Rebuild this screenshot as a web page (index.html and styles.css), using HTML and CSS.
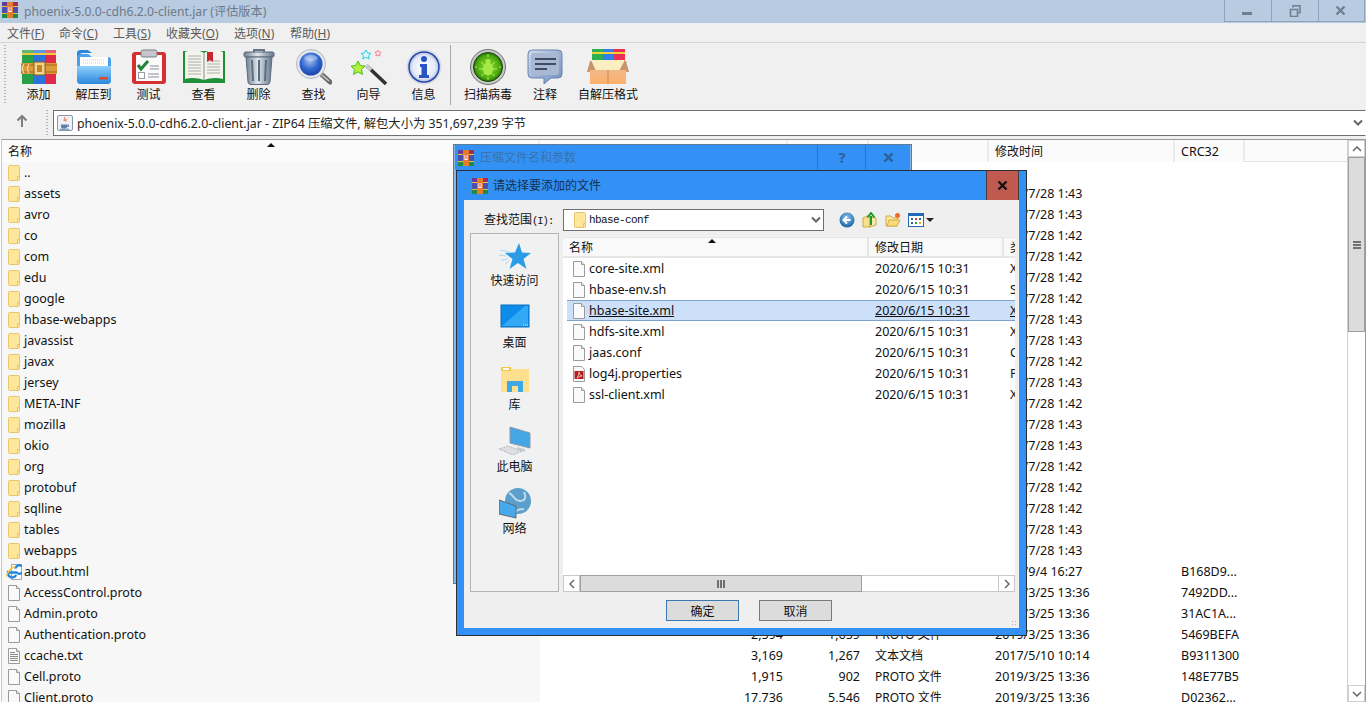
FILE: index.html
```html
<!DOCTYPE html>
<html lang="zh-CN">
<head>
<meta charset="utf-8">
<title>phoenix-5.0.0-cdh6.2.0-client.jar (评估版本)</title>
<link rel="stylesheet" href="styles.css">
</head>
<body>
<svg class="defs" aria-hidden="true">
  <defs>
    <linearGradient id="gFolder" x1="0" y1="0" x2="0" y2="1"><stop offset="0" stop-color="#8fd0fb"/><stop offset="1" stop-color="#2b87de"/></linearGradient>
    <linearGradient id="gTrash" x1="0" y1="0" x2="1" y2="0"><stop offset="0" stop-color="#6f7f90"/><stop offset=".45" stop-color="#dfe6ec"/><stop offset="1" stop-color="#66768a"/></linearGradient>
    <radialGradient id="gLens" cx=".45" cy=".35" r=".7"><stop offset="0" stop-color="#a9c3ef"/><stop offset=".55" stop-color="#2f66cf"/><stop offset="1" stop-color="#1a3ea0"/></radialGradient>
    <radialGradient id="gInfo" cx=".5" cy=".5" r=".5"><stop offset="0" stop-color="#ffffff"/><stop offset=".75" stop-color="#e3eaf8"/><stop offset="1" stop-color="#aebbdc"/></radialGradient>
    <radialGradient id="gBug" cx=".5" cy=".5" r=".5"><stop offset="0" stop-color="#8fe02a"/><stop offset=".8" stop-color="#4aa80f"/><stop offset="1" stop-color="#1f6b08"/></radialGradient>
    <linearGradient id="gBubble" x1="0" y1="0" x2="1" y2="1"><stop offset="0" stop-color="#cfdcf0"/><stop offset="1" stop-color="#6e8dbb"/></linearGradient>
    <linearGradient id="gBox" x1="0" y1="0" x2="0" y2="1"><stop offset="0" stop-color="#f0b98a"/><stop offset="1" stop-color="#ffb06a"/></linearGradient>
    <radialGradient id="gBack" cx=".5" cy=".35" r=".7"><stop offset="0" stop-color="#8dc4ec"/><stop offset="1" stop-color="#0f5a9a"/></radialGradient>

    <symbol id="rar" viewBox="0 0 16 16">
      <rect x="0" y="0" width="16" height="5" fill="#a52c52"/><rect x="0" y="0" width="5" height="5" fill="#6b3a96"/>
      <rect x="0" y="5" width="16" height="6" fill="#4a4fb0"/><rect x="0" y="11" width="16" height="5" fill="#1f8a45"/>
      <rect x="0" y="4" width="16" height="1" fill="#f0c040"/><rect x="0" y="11" width="16" height="1" fill="#e8c038"/>
      <rect x="5" y="0" width="6" height="16" fill="#e37d2a"/><rect x="6.5" y="5" width="3" height="5" fill="#fff"/><rect x="7.5" y="5" width="1" height="4" fill="#c33"/>
    </symbol>
    <symbol id="doc" viewBox="0 0 16 16"><path d="M2.500.5h8l3 3v12h-11z" fill="#fafafa" stroke="#9b9b9b"/><path d="M10.500.5v3h3" fill="#e8e8e8" stroke="#9b9b9b"/></symbol>
    <symbol id="txt" viewBox="0 0 16 16"><path d="M2.500.5h8l3 3v12h-11z" fill="#fafafa" stroke="#9b9b9b"/><path d="M10.500.5v3h3" fill="#e8e8e8" stroke="#9b9b9b"/><path d="M4 4.500h5M4 6.500h8M4 8.500h8M4 10.500h8M4 12.500h8" stroke="#8a8a8a" fill="none"/></symbol>
    <symbol id="folder" viewBox="0 0 16 16"><rect x="2.500" y=".5" width="11" height="15" rx="1" fill="#fee69a" stroke="#e9c56f"/><path d="M11.500 15.500v-4h2" fill="none" stroke="#e9c56f"/></symbol>
    <symbol id="ie" viewBox="0 0 16 16"><path d="M5.500.5h7l3 3v12h-10z" fill="#fafafa" stroke="#a5a5a5"/><path d="M2 8.500h8.500A4.300 4.300 0 1 0 9.300 4.600M10.200 11A4.300 4.300 0 0 1 2.400 7" fill="none" stroke="#1e86e0" stroke-width="2.300"/><path d="M.8 12.500C.2 10 4 4.500 9.500 2.200" fill="none" stroke="#f5c52c" stroke-width="1.300"/></symbol>
    <symbol id="pdf" viewBox="0 0 16 16"><path d="M2.500.5h8l3 3v12h-11z" fill="#fafafa" stroke="#9b9b9b"/><rect x="3.500" y="5" width="9" height="8" fill="#b81c1c"/><path d="M6 12c1.500-2 2-4 2-6 0 2 1 3 3 4-2 0-3.500 1-5 2z" fill="none" stroke="#fff" stroke-width=".7"/></symbol>
    <symbol id="jar" viewBox="0 0 16 16"><rect x=".5" y=".5" width="15" height="15" rx="1.500" fill="#eef2f7" stroke="#8b97a6"/><path d="M4 9.500h6v2a2 2 0 0 1-2 2H6a2 2 0 0 1-2-2z" fill="#5c7fa8"/><path d="M10 10h1.500v1.500H10M3 14.200h9" fill="none" stroke="#5c7fa8"/><path d="M7.500 2.500c1 1.500-1.500 2 0 3.500M9 4c.5 1-.8 1.500 0 2.500" fill="none" stroke="#d9531e"/></symbol>

    <symbol id="t-add" viewBox="0 0 36 36">
      <rect x="1" y="1" width="11" height="34" fill="#27a046"/><rect x="12" y="1" width="12" height="34" fill="#2c74dd"/><rect x="24" y="1" width="11" height="34" fill="#de2b4c"/>
      <path d="M1 4h34v2H1z" fill="#f3c93f"/><path d="M1 1h34v3H1z" fill="#fff" opacity=".25"/>
      <rect x="0" y="14" width="36" height="11" fill="#dc9a3a"/><path d="M0 16h36M0 23h36" stroke="#a96b1e"/>
      <rect x="13" y="13" width="11" height="13" fill="#f5d58c" stroke="#8a5a1a"/><rect x="16" y="16" width="5" height="7" fill="#c2832a"/>
      <path d="M3 15c-2 3-2 6 0 9M8 15c-2 3-2 6 0 9" fill="none" stroke="#fff2c8"/>
    </symbol>
    <symbol id="t-ext" viewBox="0 0 36 36">
      <path d="M1 8a3 3 0 0 1 3-3h8l4 3h16a3 3 0 0 1 3 3v20a4 4 0 0 1-4 4H5a4 4 0 0 1-4-4z" fill="#4aa0ea"/>
      <path d="M1 3.500a3 3 0 0 1 3-2.500h7c2 0 3 2 5 3H8C4 4 2 6 1 9z" fill="#2e86d8"/>
      <rect x="4" y="8" width="28" height="14" fill="#fff"/><path d="M7 11h22M7 14h22" stroke="#c4cad2" stroke-dasharray="1 1"/>
      <path d="M1 17h34v14a4 4 0 0 1-4 4H5a4 4 0 0 1-4-4z" fill="url(#gFolder)"/>
      <rect x="23" y="28" width="9" height="2.500" fill="#e2462d"/>
    </symbol>
    <symbol id="t-test" viewBox="0 0 36 36">
      <rect x="1" y="3" width="34" height="32" rx="3" fill="#d5302f"/><rect x="5" y="6" width="26" height="26" fill="#fafafa"/>
      <rect x="10" y="1" width="16" height="7" rx="2" fill="#c4c8cc" stroke="#7a7f86"/>
      <path d="M7 16l3 4 7-8" fill="none" stroke="#22803a" stroke-width="3"/>
      <path d="M19 17h9M19 20h9M17 25h11M17 28h11" stroke="#8b8f96"/><rect x="7.500" y="23.500" width="6" height="6" fill="#fff" stroke="#9a9ea4"/>
    </symbol>
    <symbol id="t-view" viewBox="0 0 42 36">
      <path d="M0 2h42v32H0z" fill="#1f8f3a"/><path d="M2 3c6-2 14-2 19 1 5-3 13-3 19-1v27c-6-2-14-1-19 1-5-2-13-3-19-1z" fill="#f4f3ec"/>
      <path d="M5 7h13M5 10h13M5 13h13M5 16h13M5 19h13M5 22h13M5 25h13M24 12h13M24 15h13M24 18h13M24 21h13M24 24h13" stroke="#aeb0ac"/>
      <path d="M21 4v27" stroke="#8b8d88"/><path d="M24 3h6v10l-3-2-3 2z" fill="#c9252c"/>
    </symbol>
    <symbol id="t-del" viewBox="0 0 36 36">
      <path d="M13 3V1h10v2" fill="none" stroke="#66768a" stroke-width="2"/><rect x="3" y="3" width="30" height="5" rx="1.500" fill="url(#gTrash)" stroke="#56667a"/>
      <path d="M5 8h26l-2 25a3 3 0 0 1-3 2.500H10A3 3 0 0 1 7 33z" fill="url(#gTrash)" stroke="#5c6c80"/>
      <path d="M11 11l1 21M18 11v21M25 11l-1 21" stroke="#5d6d80" stroke-width="2"/>
    </symbol>
    <symbol id="t-find" viewBox="0 0 36 36">
      <path d="M23 23l11 10" stroke="#6a6a6a" stroke-width="5" stroke-linecap="round"/><path d="M26 26l7 6" stroke="#d0d0d0" stroke-width="1.500"/>
      <circle cx="15" cy="15" r="15" fill="#e4e7ec"/><circle cx="15" cy="15" r="14.500" fill="none" stroke="#b2b8c2"/><circle cx="15" cy="15" r="11.500" fill="url(#gLens)"/>
      <ellipse cx="15" cy="9" rx="7" ry="3" fill="#fff" opacity=".3"/>
    </symbol>
    <symbol id="t-wiz" viewBox="0 0 36 36">
      <path d="M16 17l19 18" stroke="#303236" stroke-width="3.500"/><path d="M15 16l5 5" stroke="#c9ccd0" stroke-width="3.500"/>
      <path d="M7 12l2.300 4.500 4.700.6-3.500 3.300 1 5-4.500-2.500-4.500 2.500 1-5L0 17.100l4.700-.6z" fill="#b6f03c" stroke="#45c21e"/>
      <path d="M15 1l1.600 3 3.400.4-2.500 2.300.7 3.300-3.200-1.700-3.200 1.700.7-3.300L10 4.400l3.400-.4z" fill="#dff9ff" stroke="#24cde6"/>
      <path d="M27 1l1 2 2.200.3-1.600 1.500.4 2.200-2-1-2 1 .4-2.200-1.600-1.500L26 3z" fill="#ffe6e6" stroke="#ea8a98"/>
    </symbol>
    <symbol id="t-info" viewBox="0 0 36 36">
      <circle cx="18" cy="18" r="17.500" fill="#d5dbe6"/><circle cx="18" cy="18" r="15" fill="url(#gInfo)" stroke="#2a46a8" stroke-width="1.500"/>
      <circle cx="18" cy="10" r="3" fill="#2c55c4"/><path d="M14 15h7v11h2v3H13v-3h2.500v-8H14z" fill="#2c55c4"/>
    </symbol>
    <symbol id="t-bug" viewBox="0 0 36 36">
      <circle cx="18" cy="18" r="17.500" fill="#c6c9c6" stroke="#70746f"/><circle cx="18" cy="18" r="14.500" fill="url(#gBug)" stroke="#1f4a10"/>
      <ellipse cx="18" cy="20" rx="5" ry="6.500" fill="#a6e845"/><circle cx="18" cy="12.500" r="2.500" fill="#a6e845"/>
      <path d="M11 13l4 4M25 13l-4 4M9 20h5M27 20h-5M11 27l4-3M25 27l-4-3M18 5v3M18 28v3M5 18h2M29 18h2" stroke="#b5ee54"/>
    </symbol>
    <symbol id="t-note" viewBox="0 0 36 36">
      <path d="M5 1h26a4 4 0 0 1 4 4v20a4 4 0 0 1-4 4H24l-7 6v-6H5a4 4 0 0 1-4-4V5a4 4 0 0 1 4-4z" fill="url(#gBubble)" stroke="#6a84ad"/>
      <rect x="4" y="4" width="28" height="22" rx="3" fill="#a8b8d4"/><path d="M8 10h21M8 15h21M8 20h12" stroke="#3f4c5e" stroke-width="1.800"/>
    </symbol>
    <symbol id="t-sfx" viewBox="0 0 44 36">
      <rect x="6" y="0" width="11" height="14" fill="#2fb052"/><rect x="17" y="0" width="11" height="14" fill="#3480ea"/><rect x="28" y="0" width="11" height="14" fill="#ec2f55"/>
      <path d="M6 3h33v2H6z" fill="#f4d23c"/>
      <path d="M4 12h36l3 11H1z" fill="#c8946a"/><path d="M5 11h34l-6 11H10z" fill="#fbeec0"/>
      <path d="M4 21h36v14H4z" fill="url(#gBox)"/><path d="M22 21v14" stroke="#cf8a56"/>
    </symbol>

    <symbol id="s-star" viewBox="0 0 32 32">
      <path d="M20 3l3 9.500 9 .5-7.500 6 3 10-8.500-6-8.500 6 3-10L6 13l10-.5z" fill="#2a9be6"/>
      <path d="M1 10l9 2M0 15l7 1M2 20l7-1M6 24l4-3" stroke="#a9d8f6"/>
    </symbol>
    <symbol id="s-desk" viewBox="0 0 32 32"><rect x="2" y="3" width="28" height="22" fill="#0d8cea" stroke="#0a6fbe"/><path d="M3 24L26 4h3v20z" fill="#33a9f5"/><path d="M24 23h5" stroke="#cfeaff" stroke-dasharray="1 1"/></symbol>
    <symbol id="s-lib" viewBox="0 0 32 32"><path d="M2 3h9l3 2h16v23H2z" fill="#ffe08e"/><path d="M2 3h10v4H2z" fill="#f7c843"/><rect x="4" y="4" width="6" height="2" fill="#fff"/><path d="M8 28V17h16v11h-5v-6h-6v6z" fill="#3fa9e4"/></symbol>
    <symbol id="s-pc" viewBox="0 0 32 32"><path d="M11 1l20 6v15l-20-5z" fill="#45a6e6" stroke="#8f99a3"/><path d="M18 21l8 2v3l-8-2z" fill="#c9ced3"/><path d="M0 23l9-3 14 5-9 4z" fill="#dcdfe2" stroke="#b0b4b8" stroke-dasharray="1.500 1"/></symbol>
    <symbol id="s-net" viewBox="0 0 32 32"><circle cx="19" cy="13" r="13" fill="#5c9fca"/><path d="M10 5c5 2 5 8 12 8 3 0 6-3 3-9M16 26c0-4 5-5 9-5" stroke="#bfdcee" fill="none" stroke-width="2"/><path d="M0 12l17 6v12L0 26z" fill="#45a9ec" stroke="#5a6a78"/></symbol>

    <symbol id="n-back" viewBox="0 0 16 16"><circle cx="8" cy="8" r="7.500" fill="url(#gBack)"/><path d="M11.500 8H5M8 4.500L4.500 8 8 11.500" fill="none" stroke="#fff" stroke-width="2"/></symbol>
    <symbol id="n-up" viewBox="0 0 16 16"><path d="M1 6l4-2h3v11H1z" fill="#f9de90" stroke="#d2a93c"/><path d="M8 5l6 1v7l-6 2z" fill="#fbe8ae" stroke="#d2a93c"/><path d="M9 13V4M5.500 5.500L9 1l3.500 4.500" fill="none" stroke="#1e9a2a" stroke-width="2"/></symbol>
    <symbol id="n-new" viewBox="0 0 16 16"><path d="M1 4h5l2 2h5l-1 8H1z" fill="#fbe6a5" stroke="#d5ad47"/><path d="M2 14l2-6h11l-3 6z" fill="#fdd97c" stroke="#d5ad47"/><circle cx="12.500" cy="3.500" r="2.500" fill="#f26a2a"/></symbol>
    <symbol id="n-view" viewBox="0 0 16 16"><rect x=".5" y="1.500" width="15" height="13" fill="#fff" stroke="#2468b8"/><rect x="1" y="2" width="14" height="2" fill="#2468b8"/><path d="M3 6h2v2H3zM3 10h2v2H3z" fill="#2f5fb0"/><path d="M7 6h2v2H7z" fill="#d94a2c"/><path d="M7 10h2v2H7z" fill="#3a9a3a"/><path d="M11 6h2v2h-2z" fill="#2f5fb0"/><path d="M11 10h2v2h-2z" fill="#e0b030"/></symbol>
  </defs>
</svg>

<div class="app">
  <header class="titlebar">
    <svg class="ico16 title-ico"><use href="#rar"/></svg>
    <span class="title-text">phoenix-5.0.0-cdh6.2.0-client.jar (评估版本)</span>
    <div class="winbtns">
      <span class="winbtn"><svg class="wb" viewBox="0 0 12 12"><rect x="0" y="7" width="10" height="3" fill="#6f7f90"/></svg></span>
      <span class="winbtn"><svg class="wb" viewBox="0 0 12 12"><path d="M1.500 4.500h7v7h-7zM4 2.500V.8h7v7H9.500" fill="none" stroke="#6f7f90" stroke-width="1.600"/></svg></span>
      <span class="winbtn"><svg class="wb" viewBox="0 0 12 12"><path d="M1.500 1.500l8 8M9.500 1.500l-8 8" stroke="#6f7f90" stroke-width="2.400"/></svg></span>
    </div>
  </header>

  <nav class="menubar">
    <span class="m1">文件(<u>F</u>)</span><span class="m2">命令(<u>C</u>)</span><span class="m3">工具(<u>S</u>)</span><span class="m4">收藏夹(<u>O</u>)</span><span class="m5">选项(<u>N</u>)</span><span>帮助(<u>H</u>)</span>
  </nav>

  <div class="toolbar">
    <span class="grip"></span>
    <div class="tool"><svg class="ti"><use href="#t-add"/></svg><span>添加</span></div>
    <div class="tool"><svg class="ti"><use href="#t-ext"/></svg><span>解压到</span></div>
    <div class="tool"><svg class="ti"><use href="#t-test"/></svg><span>测试</span></div>
    <div class="tool t-wide"><svg class="ti"><use href="#t-view"/></svg><span>查看</span></div>
    <div class="tool"><svg class="ti"><use href="#t-del"/></svg><span>删除</span></div>
    <div class="tool"><svg class="ti"><use href="#t-find"/></svg><span>查找</span></div>
    <div class="tool"><svg class="ti"><use href="#t-wiz"/></svg><span>向导</span></div>
    <div class="tool"><svg class="ti"><use href="#t-info"/></svg><span>信息</span></div>
    <span class="tsep"></span>
    <div class="tool w-scan"><svg class="ti"><use href="#t-bug"/></svg><span>扫描病毒</span></div>
    <div class="tool w-note"><svg class="ti"><use href="#t-note"/></svg><span>注释</span></div>
    <div class="tool w-sfx"><svg class="ti"><use href="#t-sfx"/></svg><span>自解压格式</span></div>
  </div>

  <div class="addr">
    <svg class="addr-up" viewBox="0 0 12 14"><path d="M6 13V2M1.500 6.500L6 2l4.500 4.500" fill="none" stroke="#7d7d7d" stroke-width="2"/></svg>
    <span class="grip short"></span>
    <div class="addr-box">
      <svg class="ico16"><use href="#jar"/></svg>
      <span class="addr-text">phoenix-5.0.0-cdh6.2.0-client.jar - ZIP64 压缩文件, 解包大小为 351,697,239 字节</span>
      <svg class="chev" viewBox="0 0 10 8"><path d="M1 1.500l4 4 4-4" fill="none" stroke="#666" stroke-width="2"/></svg>
    </div>
  </div>

  <main class="list">
    <div class="table">
      <div class="row head">
        <span class="c-name">名称<svg class="sort" viewBox="0 0 8 4"><path d="M0 4L4 0l4 4z" fill="#111"/></svg></span>
        <span class="c-size">大小</span><span class="c-pack">压缩后大小</span><span class="c-type">类型</span><span class="c-date">修改时间</span><span class="c-crc">CRC32</span>
      </div>
      <div class="row"><span class="c-name"><svg class="ico16"><use href="#folder"/></svg>..</span></div>
      <div class="row"><span class="c-name"><svg class="ico16"><use href="#folder"/></svg>assets</span><span class="c-size"></span><span class="c-pack"></span><span class="c-type"></span><span class="c-date">2019/7/28 1:43</span></div>
      <div class="row"><span class="c-name"><svg class="ico16"><use href="#folder"/></svg>avro</span><span class="c-size"></span><span class="c-pack"></span><span class="c-type"></span><span class="c-date">2019/7/28 1:43</span></div>
      <div class="row"><span class="c-name"><svg class="ico16"><use href="#folder"/></svg>co</span><span class="c-size"></span><span class="c-pack"></span><span class="c-type"></span><span class="c-date">2019/7/28 1:42</span></div>
      <div class="row"><span class="c-name"><svg class="ico16"><use href="#folder"/></svg>com</span><span class="c-size"></span><span class="c-pack"></span><span class="c-type"></span><span class="c-date">2019/7/28 1:42</span></div>
      <div class="row"><span class="c-name"><svg class="ico16"><use href="#folder"/></svg>edu</span><span class="c-size"></span><span class="c-pack"></span><span class="c-type"></span><span class="c-date">2019/7/28 1:42</span></div>
      <div class="row"><span class="c-name"><svg class="ico16"><use href="#folder"/></svg>google</span><span class="c-size"></span><span class="c-pack"></span><span class="c-type"></span><span class="c-date">2019/7/28 1:42</span></div>
      <div class="row"><span class="c-name"><svg class="ico16"><use href="#folder"/></svg>hbase-webapps</span><span class="c-size"></span><span class="c-pack"></span><span class="c-type"></span><span class="c-date">2019/7/28 1:43</span></div>
      <div class="row"><span class="c-name"><svg class="ico16"><use href="#folder"/></svg>javassist</span><span class="c-size"></span><span class="c-pack"></span><span class="c-type"></span><span class="c-date">2019/7/28 1:43</span></div>
      <div class="row"><span class="c-name"><svg class="ico16"><use href="#folder"/></svg>javax</span><span class="c-size"></span><span class="c-pack"></span><span class="c-type"></span><span class="c-date">2019/7/28 1:42</span></div>
      <div class="row"><span class="c-name"><svg class="ico16"><use href="#folder"/></svg>jersey</span><span class="c-size"></span><span class="c-pack"></span><span class="c-type"></span><span class="c-date">2019/7/28 1:43</span></div>
      <div class="row"><span class="c-name"><svg class="ico16"><use href="#folder"/></svg>META-INF</span><span class="c-size"></span><span class="c-pack"></span><span class="c-type"></span><span class="c-date">2019/7/28 1:42</span></div>
      <div class="row"><span class="c-name"><svg class="ico16"><use href="#folder"/></svg>mozilla</span><span class="c-size"></span><span class="c-pack"></span><span class="c-type"></span><span class="c-date">2019/7/28 1:43</span></div>
      <div class="row"><span class="c-name"><svg class="ico16"><use href="#folder"/></svg>okio</span><span class="c-size"></span><span class="c-pack"></span><span class="c-type"></span><span class="c-date">2019/7/28 1:43</span></div>
      <div class="row"><span class="c-name"><svg class="ico16"><use href="#folder"/></svg>org</span><span class="c-size"></span><span class="c-pack"></span><span class="c-type"></span><span class="c-date">2019/7/28 1:42</span></div>
      <div class="row"><span class="c-name"><svg class="ico16"><use href="#folder"/></svg>protobuf</span><span class="c-size"></span><span class="c-pack"></span><span class="c-type"></span><span class="c-date">2019/7/28 1:42</span></div>
      <div class="row"><span class="c-name"><svg class="ico16"><use href="#folder"/></svg>sqlline</span><span class="c-size"></span><span class="c-pack"></span><span class="c-type"></span><span class="c-date">2019/7/28 1:42</span></div>
      <div class="row"><span class="c-name"><svg class="ico16"><use href="#folder"/></svg>tables</span><span class="c-size"></span><span class="c-pack"></span><span class="c-type"></span><span class="c-date">2019/7/28 1:43</span></div>
      <div class="row"><span class="c-name"><svg class="ico16"><use href="#folder"/></svg>webapps</span><span class="c-size"></span><span class="c-pack"></span><span class="c-type"></span><span class="c-date">2019/7/28 1:43</span></div>
      <div class="row"><span class="c-name"><svg class="ico16"><use href="#ie"/></svg>about.html</span><span class="c-size"></span><span class="c-pack"></span><span class="c-type"></span><span class="c-date">2019/9/4 16:27</span><span class="c-crc">B168D9...</span></div>
      <div class="row"><span class="c-name"><svg class="ico16"><use href="#doc"/></svg>AccessControl.proto</span><span class="c-size"></span><span class="c-pack"></span><span class="c-type"></span><span class="c-date">2019/3/25 13:36</span><span class="c-crc">7492DD...</span></div>
      <div class="row"><span class="c-name"><svg class="ico16"><use href="#doc"/></svg>Admin.proto</span><span class="c-size"></span><span class="c-pack"></span><span class="c-type"></span><span class="c-date">2019/3/25 13:36</span><span class="c-crc">31AC1A...</span></div>
      <div class="row"><span class="c-name"><svg class="ico16"><use href="#doc"/></svg>Authentication.proto</span><span class="c-size">2,594</span><span class="c-pack">1,659</span><span class="c-type">PROTO 文件</span><span class="c-date">2019/3/25 13:36</span><span class="c-crc">5469BEFA</span></div>
      <div class="row"><span class="c-name"><svg class="ico16"><use href="#txt"/></svg>ccache.txt</span><span class="c-size">3,169</span><span class="c-pack">1,267</span><span class="c-type">文本文档</span><span class="c-date">2017/5/10 10:14</span><span class="c-crc">B9311300</span></div>
      <div class="row"><span class="c-name"><svg class="ico16"><use href="#doc"/></svg>Cell.proto</span><span class="c-size">1,915</span><span class="c-pack">902</span><span class="c-type">PROTO 文件</span><span class="c-date">2019/3/25 13:36</span><span class="c-crc">148E77B5</span></div>
      <div class="row"><span class="c-name"><svg class="ico16"><use href="#doc"/></svg>Client.proto</span><span class="c-size">17,736</span><span class="c-pack">5,546</span><span class="c-type">PROTO 文件</span><span class="c-date">2019/3/25 13:36</span><span class="c-crc">D02362...</span></div>
    </div>
    <div class="vscroll">
      <span class="sbtn"><svg viewBox="0 0 10 6" class="sarrow"><path d="M1 5l4-4 4 4" fill="none" stroke="#666" stroke-width="1.500"/></svg></span>
      <span class="vthumb"><span class="vgrip"></span></span>
      <span class="vtrack"></span>
      <span class="sbtn"><svg viewBox="0 0 10 6" class="sarrow"><path d="M1 1l4 4 4-4" fill="none" stroke="#666" stroke-width="1.500"/></svg></span>
    </div>
  </main>
</div>

<section class="dlg-back">
  <div class="back-title">
    <svg class="ico16"><use href="#rar"/></svg>
    <span class="back-name">压缩文件名和参数</span>
    <span class="back-btn">?</span>
    <span class="back-btn x"><svg class="wb" viewBox="0 0 12 12"><path d="M1.500 1.500l8 8M9.500 1.500l-8 8" stroke="#2c5f95" stroke-width="2.400"/></svg></span>
  </div>
</section>

<section class="dlg">
  <div class="dlg-title">
    <svg class="ico16"><use href="#rar"/></svg>
    <span class="dlg-name">请选择要添加的文件</span>
    <span class="dlg-close"><svg class="wb" viewBox="0 0 12 12"><path d="M1.500 1.500l8 8M9.500 1.500l-8 8" stroke="#111" stroke-width="2.400"/></svg></span>
  </div>
  <div class="dlg-body">
    <div class="look">
      <span class="look-label">查找范围<span class="mono-key">(I):</span></span>
      <div class="combo">
        <svg class="ico16"><use href="#folder"/></svg>
        <span class="combo-text">hbase-conf</span>
        <svg class="chev" viewBox="0 0 10 8"><path d="M1 1.500l4 4 4-4" fill="none" stroke="#666" stroke-width="2"/></svg>
      </div>
      <div class="navs">
        <svg class="ico16"><use href="#n-back"/></svg>
        <svg class="ico16"><use href="#n-up"/></svg>
        <svg class="ico16"><use href="#n-new"/></svg>
        <span class="nview"><svg class="ico16"><use href="#n-view"/></svg><svg class="ncaret" viewBox="0 0 8 4"><path d="M0 0h8L4 4z" fill="#222"/></svg></span>
      </div>
    </div>
    <div class="panes">
      <aside class="places">
        <div class="place"><svg class="pi"><use href="#s-star"/></svg><span>快速访问</span></div>
        <div class="place"><svg class="pi"><use href="#s-desk"/></svg><span>桌面</span></div>
        <div class="place"><svg class="pi"><use href="#s-lib"/></svg><span>库</span></div>
        <div class="place"><svg class="pi"><use href="#s-pc"/></svg><span>此电脑</span></div>
        <div class="place"><svg class="pi"><use href="#s-net"/></svg><span>网络</span></div>
      </aside>
      <div class="files">
        <div class="fhead">
          <span class="f-name">名称<svg class="sort fsort" viewBox="0 0 8 4"><path d="M0 4L4 0l4 4z" fill="#111"/></svg></span><span class="f-date">修改日期</span><span class="f-type">类型</span>
        </div>
        <div class="frows">
          <div class="frow"><span class="f-name"><svg class="ico16"><use href="#doc"/></svg>core-site.xml</span><span class="f-date">2020/6/15 10:31</span><span class="f-type">XML 文档</span></div>
          <div class="frow"><span class="f-name"><svg class="ico16"><use href="#doc"/></svg>hbase-env.sh</span><span class="f-date">2020/6/15 10:31</span><span class="f-type">SH 文件</span></div>
          <div class="frow sel"><span class="f-name"><svg class="ico16"><use href="#doc"/></svg><u>hbase-site.xml</u></span><span class="f-date"><u>2020/6/15 10:31</u></span><span class="f-type"><u>XML 文档</u></span></div>
          <div class="frow"><span class="f-name"><svg class="ico16"><use href="#doc"/></svg>hdfs-site.xml</span><span class="f-date">2020/6/15 10:31</span><span class="f-type">XML 文档</span></div>
          <div class="frow"><span class="f-name"><svg class="ico16"><use href="#doc"/></svg>jaas.conf</span><span class="f-date">2020/6/15 10:31</span><span class="f-type">CONF 文件</span></div>
          <div class="frow"><span class="f-name"><svg class="ico16"><use href="#pdf"/></svg>log4j.properties</span><span class="f-date">2020/6/15 10:31</span><span class="f-type">PROPERTIES 文件</span></div>
          <div class="frow"><span class="f-name"><svg class="ico16"><use href="#doc"/></svg>ssl-client.xml</span><span class="f-date">2020/6/15 10:31</span><span class="f-type">XML 文档</span></div>
        </div>
        <div class="hscroll">
          <span class="hbtn"><svg viewBox="0 0 6 10" class="harrow"><path d="M5 1L1 5l4 4" fill="none" stroke="#666" stroke-width="1.500"/></svg></span>
          <span class="hthumb"><span class="hgrip"></span></span>
          <span class="htrack"></span>
          <span class="hbtn"><svg viewBox="0 0 6 10" class="harrow"><path d="M1 1l4 4-4 4" fill="none" stroke="#666" stroke-width="1.500"/></svg></span>
        </div>
      </div>
    </div>
    <div class="actions">
      <span class="btn primary">确定</span>
      <span class="btn">取消</span>
    </div>
    <span class="resize"></span>
  </div>
</section>
</body>
</html>
```
FILE: styles.css
```css
* { box-sizing: border-box; }
html, body { margin: 0; height: 100%; overflow: hidden; }
body { font: 12.5px/21px "Noto Sans", "Noto Sans CJK SC", sans-serif; color: #111; background: #fff; }
svg { display: block; flex: none; }
.defs { position: absolute; width: 0; height: 0; }
.ico16 { width: 16px; height: 16px; }

.app { height: 702px; display: flex; flex-direction: column; }

.titlebar { height: 23px; flex: none; background: #b9cbe0; display: flex; align-items: flex-start; padding-left: 2px; }
.title-ico { margin-top: 2px; }
.title-text { margin-left: 6px; font-size: 12.2px; line-height: 24px; color: #6c7a8a; }
.winbtns { margin-left: auto; margin-right: 1px; display: flex; height: 22px; border: 1px solid #8fa3b8; border-top: 0; }
.winbtn { width: 46.5px; display: flex; align-items: center; justify-content: center; border-left: 1px solid #8fa3b8; }
.winbtn:first-child { border-left: 0; }
.wb { width: 12px; height: 12px; }

.menubar { height: 20px; flex: none; background: #f0f0f0; border-bottom: 1px solid #d6d6cc; display: flex; padding-left: 7px; font-size: 12px; line-height: 21px; color: #5a5a5a; }
.menubar span { flex: none; }
.m1 { width: 52px; } .m2 { width: 54px; } .m3 { width: 53px; } .m4 { width: 68px; } .m5 { width: 56px; }

.toolbar { height: 62px; flex: none; background: #f0f0f0; display: flex; align-items: flex-start; padding: 2px 0 0 4px; }
.grip { width: 2px; height: 60px; flex: none; background: repeating-linear-gradient(to bottom, #b4b4b4 0 1px, transparent 1px 3px); }
.grip.short { height: 25px; margin-left: 18px; }
.toolbar .grip { margin-right: 5px; }
.tool { width: 55px; flex: none; display: flex; flex-direction: column; align-items: center; font-size: 12px; line-height: 16px; color: #111; padding-top: 4px; }
.tool > span { margin-top: 2px; white-space: nowrap; }
.ti { width: 36px; height: 36px; }
.t-wide .ti { width: 42px; }
.tsep { width: 1px; height: 60px; background: #a8a8a8; flex: none; margin-left: -1px; }
.w-scan { width: 74px; }
.w-note { width: 40px; }
.w-sfx { width: 86px; }
.w-sfx .ti { width: 44px; }

.addr { height: 34px; flex: none; background: #f0f0f0; display: flex; align-items: flex-start; padding: 5px 0 0 16px; }
.addr-up { width: 12px; height: 14px; margin-top: 4px; }
.addr-box { margin-left: 5px; flex: 1; height: 26px; background: #fff; border: 1px solid #707070; border-right-color: #fff; display: flex; align-items: center; padding-left: 3px; }
.addr-text { margin-left: 4px; padding-top: 1px; font-size: 12.3px; color: #222; white-space: nowrap; }
.chev { width: 10px; height: 8px; margin-left: auto; margin-right: 2px; }

.list { flex: 1; min-height: 0; margin-left: 1px; border-top: 1px solid #9a9a9a; border-left: 1px solid #c8c8c8; border-right: 1px solid #9a9a9a; display: flex; background: #fff; }
.table { flex: 1; min-width: 0; overflow: hidden; }
.row { height: 21px; display: flex; white-space: nowrap; }
.row > span { flex: none; height: 21px; overflow: hidden; }
.c-name { width: 538px; background: #f7f7f7; display: flex; align-items: center; padding-left: 4px; }
.c-name .ico16 { margin-right: 2px; }
.c-size { width: 248px; text-align: right; padding-right: 5px; }
.c-pack { width: 81px; text-align: right; padding-right: 9px; }
.c-type { width: 120px; padding-left: 6px; font-size: 12px; }
.c-date { width: 186px; padding-left: 6px; }
.c-crc { width: 70px; padding-left: 6px; }
.head { height: 22px; background: #fbfbfb; border-bottom: 1px solid #e2e2e2; font-size: 12px; }
.row.head > span { background: #fbfbfb; border-right: 2px solid #ececec; height: 22px; line-height: 23px; font-size: 12px; }
.head .c-name { padding-left: 6px; position: relative; }
.head .c-size, .head .c-pack { text-align: left; }
.row.head .c-crc { font-size: 12.5px; }
.sort { position: absolute; left: 265px; top: 3px; width: 8px; height: 4px; }

.vscroll { width: 18px; flex: none; display: flex; flex-direction: column; border-left: 1px solid #cfcfcf; }
.sbtn { height: 17px; flex: none; display: flex; align-items: center; justify-content: center; background: #fff; border: 1px solid #cfcfcf; }
.sarrow { width: 10px; height: 6px; }
.vthumb { height: 175px; flex: none; background: #dcdcdc; border: 1px solid #a0a0a0; display: flex; align-items: center; justify-content: center; }
.vgrip { width: 8px; height: 8px; background: repeating-linear-gradient(to bottom, #707070 0 2px, transparent 2px 3px); }
.vtrack { flex: 1; background: #fff; }

.dlg-back { position: absolute; left: 453px; top: 144px; width: 459px; height: 440px; background: #8db5e0; border: 1px solid #5f7a96; padding: 0 1px; }
.back-title { height: 25px; background: #3391f5; display: flex; align-items: center; padding-left: 3px; }
.back-name { margin-left: 5px; margin-right: auto; font-size: 12px; color: #3a72ac; padding-left: 1px; }
.back-btn { width: 48px; height: 25px; display: flex; align-items: center; justify-content: center; border-left: 1px solid #3a72ac; font-size: 14px; font-weight: 700; color: #2c5f95; padding-left: 1px; }
.back-btn.x { width: 45px; }

.dlg { position: absolute; left: 456px; top: 170px; width: 571px; height: 466px; background: #3391f5; border: 1px solid #2b2f36; padding: 0 7px 7px; display: flex; flex-direction: column; }
.dlg-title { height: 29px; flex: none; display: flex; align-items: center; padding-left: 8px; }
.dlg-name { margin-left: 5px; font-size: 12px; color: #13304f; }
.dlg-close { margin-left: auto; width: 33px; height: 30px; align-self: flex-start; background: #c05a50; border: 1px solid #4a3a3a; border-top: 0; display: flex; align-items: center; justify-content: center; }
.dlg-body { flex: 1; background: #efefef; padding: 9px 4px 0 6px; display: flex; flex-direction: column; position: relative; }

.look { display: flex; height: 22px; align-items: center; flex: none; }
.look-label { width: 93px; padding-left: 14px; font-size: 12px; white-space: nowrap; }
.mono-key { font: 10.5px/21px "Liberation Mono", monospace; letter-spacing: -1px; }
.combo { width: 261px; height: 22px; background: #fff; border: 1px solid #707070; display: flex; align-items: center; padding-left: 6px; }
.combo .ico16 { margin-left: 2px; }
.combo-text { margin-left: 1px; font: 11px/20px "Liberation Mono", monospace; letter-spacing: -.6px; }
.navs { display: flex; align-items: center; margin-left: 15px; gap: 7px; }
.nview { display: flex; align-items: center; gap: 2px; }
.ncaret { width: 8px; height: 4px; }

.panes { display: flex; gap: 4px; margin-top: 2px; height: 359px; flex: none; }
.places { width: 89px; flex: none; background: #f1f1f1; border: 1px solid #b4b4b4; padding-top: 6px; display: flex; flex-direction: column; gap: 13px; }
.place { display: flex; flex-direction: column; align-items: center; font-size: 12px; line-height: 16px; }
.place > span { margin-top: 1px; }
.pi { width: 32px; height: 32px; }

.files { flex: 1; min-width: 0; margin-top: 4px; background: #fff; display: flex; flex-direction: column; overflow: hidden; }
.fhead { height: 21px; flex: none; display: flex; background: #f9f9f9; border-bottom: 2px solid #e6e6e6; border-top: 1px solid #e6e6e6; line-height: 19px; font-size: 12px; }
.fhead > span { flex: none; border-right: 2px solid #e6e6e6; }
.fhead .f-name { width: 306px; padding-left: 6px; position: relative; }
.fsort { left: 145px; top: 1px; }
.f-date { width: 135px; padding-left: 6px; flex: none; white-space: nowrap; }
.f-type { width: 100px; padding-left: 6px; flex: none; white-space: nowrap; }
.frows { flex: 1; min-height: 0; }
.frow { height: 21px; margin-left: 4px; width: 448px; display: flex; }
.frow .f-name { width: 302px; flex: none; display: flex; align-items: center; padding-left: 4px; }
.frow .f-name .ico16 { margin-right: 2px; }
.frow .f-type { overflow: hidden; width: 11px; padding-right: 0; }
.sel { background: #cde0f9; border-top: 1px solid #7da2ce; border-bottom: 1px solid #7da2ce; line-height: 19px; }

.hscroll { height: 17px; flex: none; display: flex; background: #fff; border-top: 1px solid #c8c8c8; border-bottom: 1px solid #c8c8c8; }
.hbtn { width: 17px; flex: none; display: flex; align-items: center; justify-content: center; border: 1px solid #c8c8c8; border-width: 0 1px; }
.harrow { width: 6px; height: 10px; }
.hthumb { width: 282px; flex: none; background: #dcdcdc; border: 1px solid #a0a0a0; margin: -1px 0; display: flex; align-items: center; justify-content: center; }
.hgrip { width: 8px; height: 8px; background: repeating-linear-gradient(to right, #707070 0 2px, transparent 2px 3px); }
.htrack { flex: 1; }

.actions { display: flex; gap: 20px; margin-top: 8px; padding-left: 196px; }
.btn { width: 73px; height: 21px; background: #dcdcdc; border: 1px solid #7a7a7a; font-size: 12px; line-height: 21px; text-align: center; }
.btn.primary { border-color: #3a78b0; }
.resize { position: absolute; right: 1px; bottom: 1px; width: 7px; height: 7px; background: radial-gradient(circle, #b0b0b0 .7px, transparent .8px) 0 0 / 3px 3px; }
```
